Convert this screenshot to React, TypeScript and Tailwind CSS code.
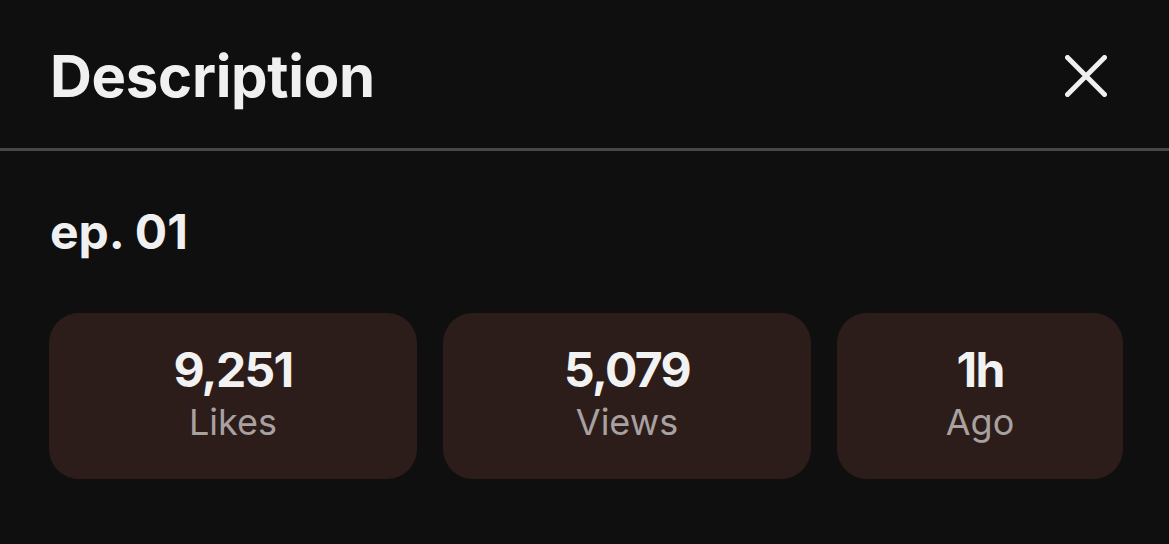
import React from "react";

function Stat({ value, label, w }: { value: string; label: string; w: string }) {
  return (
    <div className={`${w} h-[166px] rounded-[30px] bg-[#2d1d1a] flex flex-col items-center pt-[33px]`}>
      <div className="text-[48px] leading-[48px] font-bold text-[#f2f2f2] tracking-[-0.035em]">{value}</div>
      <div className="mt-[10px] text-[36px] leading-[36px] font-normal text-[#a8a1a0]">{label}</div>
    </div>
  );
}

export default function App() {
  return (
    <div
      className="w-[1169px] h-[544px] bg-[#0f0f0f] overflow-hidden"
      style={{ fontFamily: "Inter, 'Noto Sans', sans-serif" }}
    >
      <div className="flex items-start justify-between pl-[50px] pr-[62px] pt-[47px] h-[148px]">
        <h1 className="text-[58px] leading-[58px] font-bold text-[#f0f0f0] tracking-[-0.005em]">Description</h1>
        <svg width="42" height="42" viewBox="0 0 42 42" className="mt-[8px]">
          <path d="M2.5 2.5 L39.5 39.5 M39.5 2.5 L2.5 39.5" stroke="#f0f0f0" strokeWidth="5" strokeLinecap="round" />
        </svg>
      </div>
      <div className="h-[3px] bg-[#474747]" />
      <div className="pl-[50px] pt-[57px]">
        <div className="text-[48px] leading-[48px] font-bold text-[#f0f0f0] whitespace-pre">ep. 01</div>
      </div>
      <div className="flex gap-[26px] pl-[49px] pt-[57px]">
        <Stat value="9,251" label="Likes" w="w-[368px]" />
        <Stat value="5,079" label="Views" w="w-[368px]" />
        <Stat value="1h" label="Ago" w="w-[286px]" />
      </div>
    </div>
  );
}
